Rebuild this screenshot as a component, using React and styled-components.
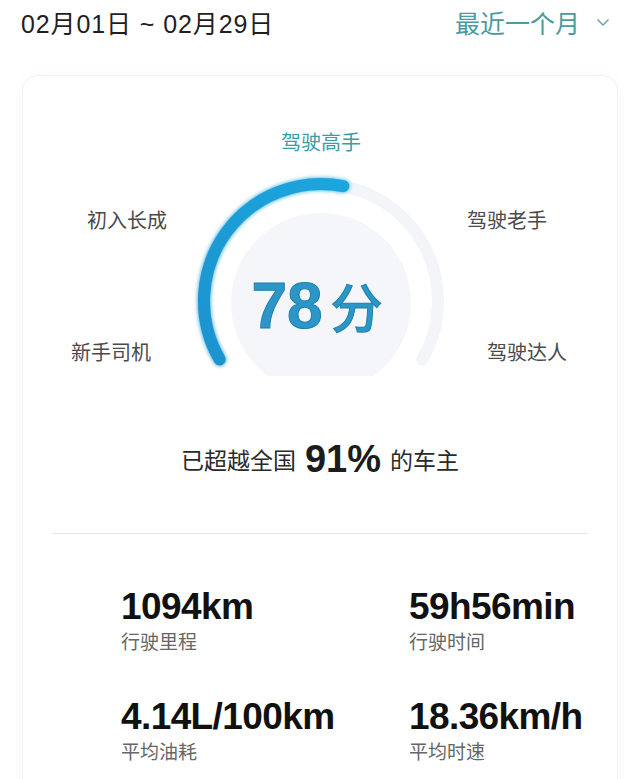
import React from 'react';
import styled, { createGlobalStyle } from 'styled-components';

const Global = createGlobalStyle`
  body {
    margin: 0;
    background: #ffffff;
    font-family: "Liberation Sans", "Noto Sans CJK SC", sans-serif;
  }
`;

const Page = styled.div`
  width: 640px;
  height: 779px;
  overflow: hidden;
  background: #fff;
`;

const Header = styled.header`
  height: 44px;
  display: flex;
  align-items: center;
  justify-content: space-between;
  padding: 0 30px 0 21px;
`;

const DateRange = styled.div`
  font-size: 25px;
  color: #1f1f1f;
  letter-spacing: 0.9px;
`;

const Period = styled.button`
  display: flex;
  align-items: center;
  gap: 16px;
  border: 0;
  background: none;
  padding: 0;
  font-family: inherit;
  font-size: 25px;
  color: #4a9a9e;
`;

const Card = styled.section`
  margin: 31px 22px 0;
  padding-top: 50px;
  border-radius: 16px;
  border: 1px solid #f2f4f7;
  box-shadow: 0 0 12px rgba(0, 0, 0, 0.035);
  background: #fff;
  height: 760px;
`;

const Gauge = styled.div`
  position: relative;
  height: 260px;
  display: flex;
  justify-content: center;
`;

const Dial = styled.svg`
  margin-left: 2px;
`;

const Level = styled.span`
  position: absolute;
  font-size: 20px;
  line-height: 20px;
  color: ${p => (p.$active ? '#3b9ca8' : '#4a4a4a')};
  left: ${p => p.$x}px;
  top: ${p => p.$y}px;
  transform: ${p => (p.$center ? 'translateX(-50%)' : 'none')};
  white-space: nowrap;
`;

const Score = styled.div`
  position: absolute;
  left: 294px;
  top: 148px;
  transform: translateX(-50%);
  display: flex;
  align-items: baseline;
  gap: 8px;
  color: #2b96c7;
  -webkit-text-stroke: 1px #1f80ad;
`;

const ScoreNum = styled.span`
  font-size: 64px;
  font-weight: 700;
  line-height: 64px;
`;

const ScoreUnit = styled.span`
  font-size: 52px;
  font-weight: 500;
  line-height: 64px;
`;

const Summary = styled.p`
  margin: 53px 0 0;
  height: 40px;
  display: flex;
  align-items: center;
  justify-content: center;
  gap: 9px;
  font-size: 23px;
  color: #2a2a2a;
`;

const Percent = styled.strong`
  font-size: 38px;
  font-weight: 700;
  color: #1c1c1c;
`;

const Divider = styled.hr`
  margin: 54px 30px 0;
  border: 0;
  border-top: 1px solid #e4e4e4;
`;

const Stats = styled.div`
  margin-top: 52px;
  padding-left: 98px;
  display: grid;
  grid-template-columns: 288px 1fr;
  row-gap: 41px;
`;

const Stat = styled.div`
  display: flex;
  flex-direction: column;
  gap: 3px;
`;

const Value = styled.span`
  font-size: 37px;
  line-height: 42px;
  font-weight: 700;
  color: #111;
  letter-spacing: -0.6px;
`;

const Label = styled.span`
  font-size: 19px;
  line-height: 24px;
  color: #666;
`;

const cx = 140;
const cy = 175;
const r = 117;
const pt = deg => {
  const a = (deg * Math.PI) / 180;
  return [cx + r * Math.cos(a), cy - r * Math.sin(a)];
};
const [sx, sy] = pt(210);
const [ex, ey] = pt(79);
const [tx, ty] = pt(-30);

const stats = [
  { value: '1094km', label: '行驶里程' },
  { value: '59h56min', label: '行驶时间' },
  { value: '4.14L/100km', label: '平均油耗' },
  { value: '18.36km/h', label: '平均时速' },
];

export default function App() {
  return (
    <Page>
      <Global />
      <Header>
        <DateRange>02月01日 ~ 02月29日</DateRange>
        <Period>
          最近一个月
          <svg width="14" height="10" viewBox="0 0 14 10">
            <path d="M1.5 2.5 L7 8 L12.5 2.5" fill="none" stroke="#6a9ea2" strokeWidth="1.4" />
          </svg>
        </Period>
      </Header>
      <Card>
        <Gauge>
          <Dial width="280" height="250" viewBox="0 0 280 250">
            <defs>
              <linearGradient id="arcGrad" x1="0" y1="1" x2="1" y2="0">
                <stop offset="0" stopColor="#1b93cf" />
                <stop offset="1" stopColor="#1ea6de" />
              </linearGradient>
              <filter id="glow" x="-20%" y="-20%" width="140%" height="140%">
                <feGaussianBlur stdDeviation="2" result="b" />
                <feMerge>
                  <feMergeNode in="b" />
                  <feMergeNode in="SourceGraphic" />
                </feMerge>
              </filter>
            </defs>
            <circle cx={cx} cy={cy + 2} r="90" fill="#f4f6f9" />
            <path
              d={`M${sx} ${sy} A${r} ${r} 0 1 1 ${tx} ${ty}`}
              fill="none"
              stroke="#f3f5f8"
              strokeWidth="12"
              strokeLinecap="round"
            />
            <path
              d={`M${sx} ${sy} A${r} ${r} 0 0 1 ${ex} ${ey}`}
              fill="none"
              stroke="url(#arcGrad)"
              strokeWidth="12"
              strokeLinecap="round"
              filter="url(#glow)"
            />
          </Dial>
          <Level $active $center $x={298} $y={7}>驾驶高手</Level>
          <Level $x={64} $y={85}>初入长成</Level>
          <Level $x={444} $y={85}>驾驶老手</Level>
          <Level $x={48} $y={217}>新手司机</Level>
          <Level $x={464} $y={217}>驾驶达人</Level>
          <Score>
            <ScoreNum>78</ScoreNum>
            <ScoreUnit>分</ScoreUnit>
          </Score>
        </Gauge>
        <Summary>
          已超越全国 <Percent>91%</Percent> 的车主
        </Summary>
        <Divider />
        <Stats>
          {stats.map(s => (
            <Stat key={s.label}>
              <Value>{s.value}</Value>
              <Label>{s.label}</Label>
            </Stat>
          ))}
        </Stats>
      </Card>
    </Page>
  );
}
